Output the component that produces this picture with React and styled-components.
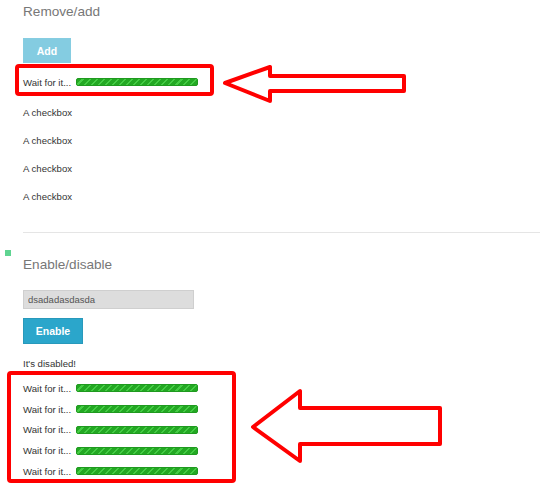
import React from "react";
import styled, { createGlobalStyle } from "styled-components";

const GlobalStyle = createGlobalStyle`
  body {
    margin: 0;
    background: #fff;
    font-family: "Liberation Sans", Arial, sans-serif;
    color: #333;
  }
`;

const Page = styled.div`
  position: relative;
  width: 541px;
  height: 498px;
  overflow: hidden;
`;

const Content = styled.div`
  padding: ${(p) => p.top || 0}px 1px 0 23px;
`;

const Heading = styled.h3`
  margin: ${(p) => p.offset || 0}px 0 0;
  font-size: 13.6px;
  font-weight: normal;
  line-height: 20px;
  height: 20px;
  color: #777;
`;

const Button = styled.button`
  display: flex;
  align-items: center;
  justify-content: center;
  width: ${(p) => p.w}px;
  height: ${(p) => p.h}px;
  margin-top: ${(p) => p.mt}px;
  padding: 0;
  border: 1px solid ${(p) => (p.disabled ? "#86cde1" : "#2899bb")};
  background: ${(p) => (p.disabled ? "#84cce1" : "#2ba6cb")};
  color: #fff;
  font-family: "Liberation Sans", Arial, sans-serif;
  font-weight: bold;
  font-size: 10.5px;
`;

const Row = styled.div`
  display: flex;
  align-items: center;
  height: ${(p) => p.h}px;
  margin-top: ${(p) => p.mt || 0}px;
  font-size: 9.6px;
  color: #333;
`;

const Bar = styled.div`
  width: 122px;
  height: 8px;
  margin-left: 5px;
  box-sizing: border-box;
  border: 1px solid #1f9a1f;
  border-radius: 2px;
  background-color: #23a823;
  background-image: repeating-linear-gradient(
    135deg,
    transparent 0,
    transparent 3.5px,
    #44cc44 3.5px,
    #44cc44 5px
  );
`;

const Rule = styled.hr`
  margin: 22px 0 0;
  border: 0;
  height: 1px;
  background: #e5e5e5;
`;

const Marker = styled.div`
  width: 6px;
  height: 6px;
  margin: 17px 0 0 5px;
  background: #5fd491;
`;

const Input = styled.input`
  display: block;
  width: 171px;
  height: 19px;
  margin-top: 15px;
  box-sizing: border-box;
  padding: 0 0 0 4px;
  border: 1px solid #cfcfcf;
  background: #dddddd;
  font-family: "Liberation Sans", Arial, sans-serif;
  font-size: 9.5px;
  color: #555;
`;

const Overlay = styled.svg`
  position: absolute;
  top: 0;
  left: 0;
  pointer-events: none;
`;

const Waiting = ({ h, mt }) => (
  <Row h={h} mt={mt}>
    Wait for it...
    <Bar />
  </Row>
);

export default function App() {
  const checks = [0, 1, 2, 3];
  const waits = [0, 1, 2, 3, 4];
  return (
    <Page>
      <GlobalStyle />
      <Content top={2}>
        <Heading>Remove/add</Heading>
        <Button w={48} h={25} mt={16} disabled>
          Add
        </Button>
        <Waiting h={20} mt={9} />
        <div style={{ marginTop: 6 }}>
          {checks.map((i) => (
            <Row key={i} h={28}>
              A checkbox
            </Row>
          ))}
        </div>
        <Rule />
      </Content>
      <Marker />
      <Content>
        <Heading offset={-1}>Enable/disable</Heading>
        <Input readOnly value="dsadadasdasda" />
        <Button w={60} h={26} mt={9}>
          Enable
        </Button>
        <Row h={20} mt={9}>
          It's disabled!
        </Row>
        <div style={{ marginTop: 5 }}>
          {waits.map((i) => (
            <Waiting key={i} h={20.75} />
          ))}
        </div>
      </Content>
      <Overlay width="541" height="498" viewBox="0 0 541 498">
        <g fill="none" stroke="#ff0000" strokeWidth="4" strokeLinejoin="round">
          <rect x="17" y="66" width="195" height="28" rx="2" />
          <path d="M225 83 L270 67 L270 76 L404 76 L404 91 L270 91 L270 101 Z" />
          <rect x="9" y="373" width="225" height="108" rx="2" />
          <path d="M253 427 L300 391 L300 408 L440 408 L440 444 L300 444 L300 461 Z" />
        </g>
      </Overlay>
    </Page>
  );
}
